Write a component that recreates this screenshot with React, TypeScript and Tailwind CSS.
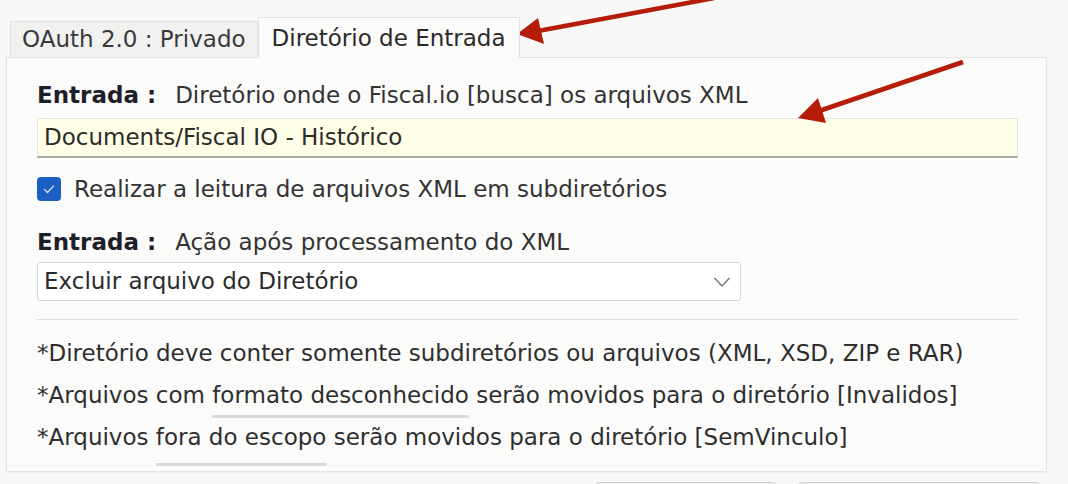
import React from "react";

const font = { fontFamily: '"DejaVu Sans", Verdana, sans-serif' };

function Arrows() {
  return (
    <svg
      className="absolute inset-0 pointer-events-none"
      width="1068"
      height="484"
      viewBox="0 0 1068 484"
    >
      {/* arrow pointing at the active tab */}
      <line x1="714" y1="-2" x2="538" y2="31" stroke="#b51d0a" strokeWidth="4.5" />
      <polygon points="517,34 538,18 544,44" fill="#b51d0a" />
      {/* arrow pointing at the input */}
      <line x1="963" y1="62" x2="819" y2="111" stroke="#b51d0a" strokeWidth="5" />
      <polygon points="798,118 818,98 826,123" fill="#b51d0a" />
    </svg>
  );
}

export default function App() {
  return (
    <div
      className="relative w-[1068px] h-[484px] overflow-hidden bg-[#f8f8f7] text-[#333] text-[23px]"
      style={font}
    >
      <div className="pl-[6px] pt-[17px]">
        {/* Tabs */}
        <div className="flex items-end pl-[4px]">
          <div className="h-[36px] px-[11px] flex items-center border border-b-0 border-[#e2e2e2] bg-[#f1f1f0] text-[#3a3a3a] whitespace-nowrap">
            OAuth 2.0 : Privado
          </div>
          <div className="relative z-10 -mb-px h-[41px] px-[13px] flex items-center border border-b-0 border-[#e2e2e2] bg-[#fbfbfa] text-[#2a2a2a] whitespace-nowrap">
            Diretório de Entrada
          </div>
        </div>

        {/* Panel */}
        <div className="w-[1041px] border border-[#e4e4e4] bg-[#fbfbfa] pl-[30px] pr-[28px] pt-[23px] pb-[13px] shadow-[0_1px_2px_rgba(0,0,0,0.06)]">
          <div className="h-[28px] flex items-center whitespace-nowrap">
            <span className="font-bold text-[#1e1e2a]">Entrada :</span>
            <span className="ml-[19px]">Diretório onde o Fiscal.io [busca] os arquivos XML</span>
          </div>

          <div className="mt-[9px] h-[40px] flex items-center px-[6px] bg-[#fffee6] border border-[#e6e6e0] border-b-2 border-b-[#a8a8a8] text-[#2b2b2b]">
            Documents/Fiscal IO - Histórico
          </div>

          <label className="mt-[17px] h-[28px] flex items-center whitespace-nowrap">
            <span className="w-[24px] h-[24px] rounded-[4px] bg-[#1b5fc3] flex items-center justify-center">
              <svg width="16" height="16" viewBox="0 0 16 16">
                <polyline
                  points="3.5,8.5 6.5,11.5 12.5,5"
                  fill="none"
                  stroke="#c9dcf6"
                  strokeWidth="1.4"
                  strokeLinecap="round"
                  strokeLinejoin="round"
                />
              </svg>
            </span>
            <span className="ml-[13px]">Realizar a leitura de arquivos XML em subdiretórios</span>
          </label>

          <div className="mt-[25px] h-[28px] flex items-center whitespace-nowrap">
            <span className="font-bold text-[#1e1e2a]">Entrada :</span>
            <span className="ml-[19px]">Ação após processamento do XML</span>
          </div>

          <div className="mt-[6px] w-[704px] h-[39px] flex items-center justify-between pl-[6px] pr-[9px] bg-white border border-[#d6d6d6] rounded-[3px] text-[#2b2b2b]">
            <span>Excluir arquivo do Diretório</span>
            <svg width="18" height="12" viewBox="0 0 18 12">
              <polyline
                points="1.5,2 9,10 16.5,2"
                fill="none"
                stroke="#777"
                strokeWidth="1.5"
              />
            </svg>
          </div>

          <div className="mt-[18px] border-t border-[#dedede]" />

          <div className="mt-[12px] text-[#2e2e2e] whitespace-nowrap">
            <div className="h-[42px] flex items-center">
              *Diretório deve conter somente subdiretórios ou arquivos (XML, XSD, ZIP e RAR)
            </div>
            <div className="h-[42px] flex items-center">
              <span className="whitespace-pre">*Arquivos com </span>
              <span className="underline decoration-[#dadada] decoration-[3px] underline-offset-[12px]">
                formato desconhecido
              </span>
              <span className="whitespace-pre"> serão movidos para o diretório [Invalidos]</span>
            </div>
            <div className="h-[42px] flex items-center">
              <span className="whitespace-pre">*Arquivos </span>
              <span className="underline decoration-[#dadada] decoration-[3px] underline-offset-[18px]">
                fora do escopo
              </span>
              <span className="whitespace-pre"> serão movidos para o diretório [SemVinculo]</span>
            </div>
          </div>
        </div>

        {/* Buttons (cut off by the bottom edge) */}
        <div className="flex mt-[10px] pl-[589px] gap-[21px]">
          <button className="w-[182px] h-[34px] rounded-[4px] border border-[#cfcfcf] bg-[#f1f1f1]" />
          <button className="w-[242px] h-[34px] rounded-[4px] border border-[#cfcfcf] bg-[#f1f1f1]" />
        </div>
      </div>

      <Arrows />
    </div>
  );
}
